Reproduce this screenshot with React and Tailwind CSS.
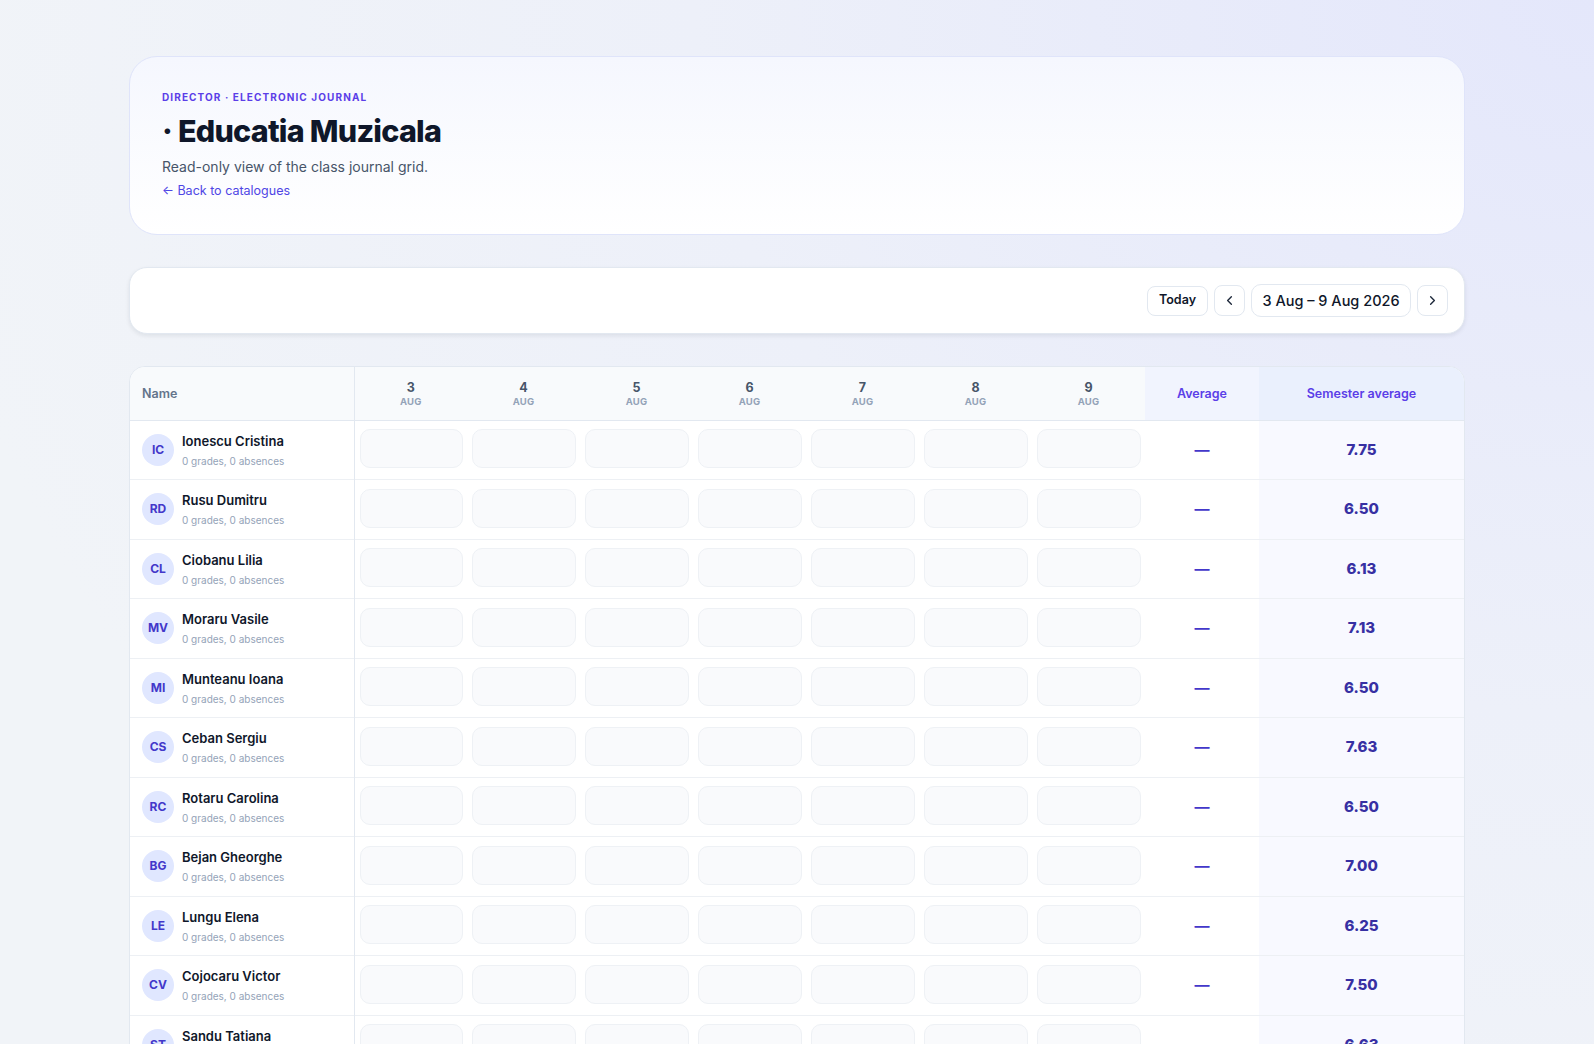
import { ChevronLeft, ChevronRight } from "lucide-react";

const days = [3, 4, 5, 6, 7, 8, 9];

const students = [
  { initials: "IC", name: "Ionescu Cristina", semester: "7.75" },
  { initials: "RD", name: "Rusu Dumitru", semester: "6.50" },
  { initials: "CL", name: "Ciobanu Lilia", semester: "6.13" },
  { initials: "MV", name: "Moraru Vasile", semester: "7.13" },
  { initials: "MI", name: "Munteanu Ioana", semester: "6.50" },
  { initials: "CS", name: "Ceban Sergiu", semester: "7.63" },
  { initials: "RC", name: "Rotaru Carolina", semester: "6.50" },
  { initials: "BG", name: "Bejan Gheorghe", semester: "7.00" },
  { initials: "LE", name: "Lungu Elena", semester: "6.25" },
  { initials: "CV", name: "Cojocaru Victor", semester: "7.50" },
  { initials: "ST", name: "Sandu Tatiana", semester: "6.63" },
  { initials: "PA", name: "Popa Andrei", semester: "7.25" },
  { initials: "GM", name: "Guțu Mihaela", semester: "6.88" },
];

function HeaderCard() {
  return (
    <section className="rounded-[28px] border border-[#dfe4fa] bg-gradient-to-b from-[#f5f7fe] to-white px-8 pt-8 pb-[33px]">
      <p className="text-[10px] font-bold uppercase leading-4 tracking-[0.11em] text-[#5b3ee8]">
        Director · Electronic journal
      </p>
      <h1 className="mt-2 text-[30.5px] font-extrabold leading-9 tracking-[-0.025em] text-[#0f172a]">
        · Educatia Muzicala
      </h1>
      <p className="mt-1.5 text-[14px] leading-6 text-[#475569]">
        Read-only view of the class journal grid.
      </p>
      <a href="#" className="mt-0.5 block text-[12.5px] leading-5 text-[#4f46e5]">
        ← Back to catalogues
      </a>
    </section>
  );
}

function Toolbar() {
  return (
    <section className="flex h-[67px] items-center justify-end gap-1.5 rounded-[18px] border border-[#e2e8f0] bg-white px-4 shadow-[0_2px_4px_rgba(15,23,42,0.08)]">
      <button className="h-[30px] rounded-lg border border-[#e2e8f0] bg-white px-[11px] text-[12.5px] font-semibold text-[#0f172a]">
        Today
      </button>
      <button className="flex h-[31px] w-[31px] items-center justify-center rounded-lg border border-[#e2e8f0] bg-white text-[#1e293b]">
        <ChevronLeft size={15} strokeWidth={2.2} />
      </button>
      <div className="flex h-[33px] w-[160px] items-center justify-center rounded-[10px] border border-[#e2e8f0] bg-white text-[14.5px] font-medium text-[#0f172a]">
        3 Aug – 9 Aug 2026
      </div>
      <button className="flex h-[31px] w-[31px] items-center justify-center rounded-lg border border-[#e2e8f0] bg-white text-[#1e293b]">
        <ChevronRight size={15} strokeWidth={2.2} />
      </button>
    </section>
  );
}

function JournalTable() {
  return (
    <section className="overflow-hidden rounded-2xl border border-[#e2e8f0] bg-white">
      <table className="w-full table-fixed border-collapse">
        <colgroup>
          <col className="w-[224px]" />
          {days.map((d) => (
            <col key={d} className="w-[113px]" />
          ))}
          <col className="w-[114px]" />
          <col />
        </colgroup>
        <thead>
          <tr className="h-[53px] border-b border-[#e2e8f0]">
            <th className="border-r border-[#e2e8f0] bg-[#f8fafc] pl-3 pt-0.5 text-left text-[12.5px] font-semibold text-[#64748b]">
              Name
            </th>
            {days.map((d) => (
              <th key={d} className="bg-[#f8fafc] pt-0.5 text-center">
                <div className="text-[12.5px] font-bold leading-4 text-[#475569]">{d}</div>
                <div className="text-[9.5px] font-bold leading-3 tracking-wide text-[#94a3b8]">AUG</div>
              </th>
            ))}
            <th className="bg-[#f1f4fe] pt-0.5 text-center text-[12.5px] font-semibold text-[#5b3ee8]">
              Average
            </th>
            <th className="bg-[#eaf0fd] pt-0.5 text-center text-[12.5px] font-semibold text-[#5b3ee8]">
              Semester average
            </th>
          </tr>
        </thead>
        <tbody>
          {students.map((s) => (
            <tr key={s.name} className="border-b border-[#edf0f4]">
              <td className="border-r border-[#e2e8f0] pl-3 align-middle">
                <div className="flex items-center gap-2">
                  <div className="flex h-8 w-8 shrink-0 items-center justify-center rounded-full bg-[#e0e7ff] text-[12px] font-bold text-[#4338ca]">
                    {s.initials}
                  </div>
                  <div className="min-w-0">
                    <div className="text-[13px] font-semibold leading-5 text-[#0f172a]">{s.name}</div>
                    <div className="mt-0.5 text-[10px] leading-4 text-[#94a3b8]">0 grades, 0 absences</div>
                  </div>
                </div>
              </td>
              {days.map((d) => (
                <td key={d} className="px-1 pt-[8.5px] pb-[11px] align-top">
                  <div className="ml-[1px] h-[39px] rounded-[10px] border border-[#eef1f5] bg-[#f9fafc]" />
                </td>
              ))}
              <td className="text-center align-middle text-[15px] font-bold text-[#4338ca]">—</td>
              <td className="bg-[#f8f9ff] text-center align-middle text-[15px] font-extrabold text-[#3730a3]">
                {s.semester}
              </td>
            </tr>
          ))}
        </tbody>
      </table>
    </section>
  );
}

export default function App() {
  return (
    <div
      className="min-h-screen bg-[#f1f4f8] bg-[radial-gradient(ellipse_at_top_right,#e4e7fb_0%,#edf0f9_40%,#f1f4f8_75%)] pt-14 pb-16"
      style={{ fontFamily: "Inter, 'Noto Sans', sans-serif" }}
    >
      <div className="mx-auto flex w-full max-w-[1336px] flex-col gap-8">
        <HeaderCard />
        <Toolbar />
        <JournalTable />
      </div>
    </div>
  );
}
